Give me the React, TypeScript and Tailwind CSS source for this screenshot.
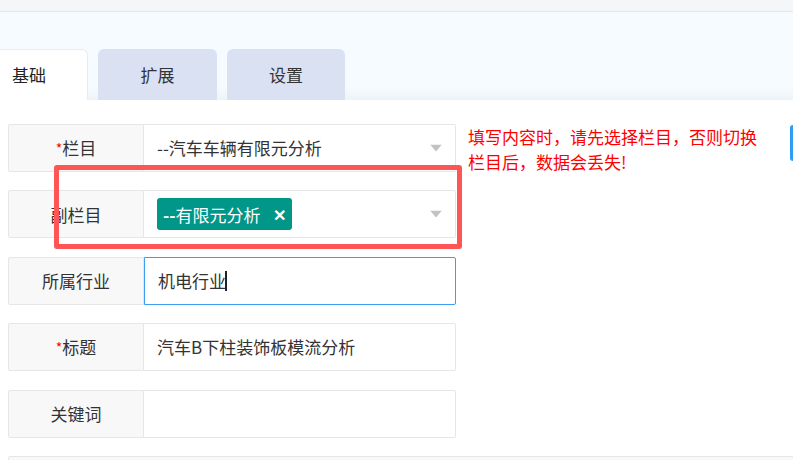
import React from "react";

const font = { fontFamily: '"Microsoft YaHei", "Noto Sans CJK SC", "Noto Sans", sans-serif' };

function Arrow() {
  return (
    <svg width="12" height="7" viewBox="0 0 12 7" className="absolute right-[13px] top-1/2 -translate-y-1/2">
      <polygon points="0,0 12,0 6,7" fill="#c2c2c2" />
    </svg>
  );
}

function Row({ label, req, children, focused, select }: { label: string; req?: boolean; children?: React.ReactNode; focused?: boolean; select?: boolean }) {
  return (
    <div className="flex h-[48px] w-[448px] shrink-0">
      <div className="w-[136px] shrink-0 flex items-center justify-center bg-[#f8f8f8] border border-[#e6e6e6] rounded-l-[2px] text-[#333] text-[17px]">
        {req && <span className="text-[#ff0000] text-[14px] self-start mt-[13px]">*</span>}
        {label}
      </div>
      <div className={`relative flex-1 flex items-center pl-[13px] text-[17px] text-[#333] bg-white rounded-r-[2px] border ${focused ? "border-[#3a9ff2]" : "border-[#e6e6e6] border-l-0"}`}>
        {children}
        {select && <Arrow />}
      </div>
    </div>
  );
}

export default function App() {
  return (
    <div className="w-[793px] h-[460px] overflow-hidden bg-white relative" style={font}>
      <div className="h-[12px] bg-[#f5f6f7] border-b border-[#e3e5e8]" />
      <div className="h-[88px] bg-gradient-to-b from-[#f5fbfe] from-85% to-[#edf3f6] flex items-end">
        <div className="flex gap-[10px] items-end">
          <div className="ml-[-30px] w-[118px] h-[51px] bg-white rounded-t-[6px] border border-b-0 border-[#e6ecf2] flex items-center justify-center text-[17px] text-[#222]">基础</div>
          <div className="w-[119px] h-[51px] bg-[#d9e1f3] rounded-t-[6px] flex items-center justify-center text-[17px] text-[#333]">扩展</div>
          <div className="w-[118px] h-[51px] bg-[#d9e1f3] rounded-t-[6px] flex items-center justify-center text-[17px] text-[#333]">设置</div>
        </div>
      </div>
      <div className="pl-[8px] pt-[24px] flex flex-col gap-[18.4px]">
        <div className="flex h-[48px] items-start">
          <Row label="栏目" req select>
            --汽车车辆有限元分析
          </Row>
          <div className="ml-[12px] text-[#ff0000] text-[17px] leading-[25px] w-[305px] shrink-0">
            填写内容时，请先选择栏目，否则切换栏目后，数据会丢失!
          </div>
          <div className="ml-auto mt-[1px] w-[8px] h-[36px] bg-[#2e9df5] rounded-[3px] translate-x-[5px]" />
        </div>
        <Row label="副栏目" select>
          <span className="h-[32px] px-[6px] bg-[#009688] rounded-[3px] text-white flex items-center">
            <b className="font-bold">--</b>有限元分析<span className="ml-[12px] text-[16px] font-bold">✕</span>
          </span>
        </Row>
        <Row label="所属行业" focused>
          机电行业<span className="inline-block w-[2px] h-[20px] bg-[#222] ml-[-1px]" />
        </Row>
        <Row label="标题" req>
          汽车B下柱装饰板模流分析
        </Row>
        <Row label="关键词" />
        <div className="h-[48px] bg-[#f8f8f8] border border-[#e6e6e6] rounded-[2px] mr-[-10px] shrink-0" />
      </div>
      <div className="absolute left-[54px] top-[165px] w-[408px] h-[84px] border-[5px] border-[#ff5555] rounded-[3px]" />
    </div>
  );
}
